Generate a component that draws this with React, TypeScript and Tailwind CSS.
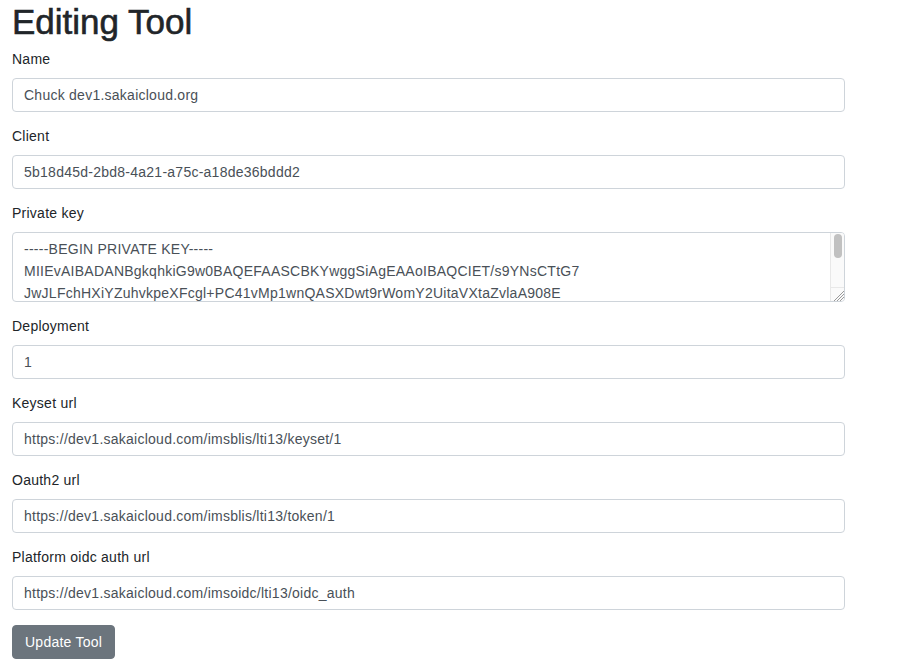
import React from "react";

const keyText = `-----BEGIN PRIVATE KEY-----
MIIEvAIBADANBgkqhkiG9w0BAQEFAASCBKYwggSiAgEAAoIBAQCIET/s9YNsCTtG7
JwJLFchHXiYZuhvkpeXFcgl+PC41vMp1wnQASXDwt9rWomY2UitaVXtaZvlaA908E
k3Wm0aNq5Ljn8X0bYt2PqfJ7uG1bLx9mK4dZrT6s3HcQvE8yWnU0iOa2pFgD5eRt
Lq7bN1cZ8xV9sM2kJ3hY6tR4wP0aE5uI7oG9dF2nB8vC1xQ3zA6mS4lK7jH0gT5e
-----END PRIVATE KEY-----`;

const fields: { label: string; value: string }[] = [
  { label: "Deployment", value: "1" },
  { label: "Keyset url", value: "https://dev1.sakaicloud.com/imsblis/lti13/keyset/1" },
  { label: "Oauth2 url", value: "https://dev1.sakaicloud.com/imsblis/lti13/token/1" },
  { label: "Platform oidc auth url", value: "https://dev1.sakaicloud.com/imsoidc/lti13/oidc_auth" },
];

const font = { fontFamily: '"Liberation Sans", Arial, sans-serif' };

function Field({ label, value }: { label: string; value: string }) {
  return (
    <div className="mb-[14px]">
      <label className="block text-[14px] leading-[21px] mb-[8px] text-[#212529] tracking-[0.25px]">{label}</label>
      <input
        readOnly
        value={value}
        className="block w-[833px] h-[34px] px-[11px] text-[14px] tracking-[0.25px] text-[#495057] bg-white border border-[#ced4da] rounded-[4px] outline-none"
        style={font}
      />
    </div>
  );
}

export default function App() {
  return (
    <div className="bg-white min-h-[662px] px-[12px] text-[#212529]" style={font}>
      <h1 className="text-[35px] leading-[44px] font-normal mb-[5px] m-0 [-webkit-text-stroke:0.6px_#212529]">
        Editing Tool
      </h1>
      <Field label="Name" value="Chuck dev1.sakaicloud.org" />
      <Field label="Client" value="5b18d45d-2bd8-4a21-a75c-a18de36bddd2" />
      <div className="mb-[14px]">
        <label className="block text-[14px] leading-[21px] mb-[8px] text-[#212529] tracking-[0.25px]">Private key</label>
        <div className="relative w-[833px] h-[70px]">
          <textarea
            readOnly
            value={keyText}
            className="block w-[833px] h-[70px] pl-[11px] pr-[20px] pt-[5px] text-[14px] leading-[22px] tracking-[0.25px] text-[#495057] bg-white border border-[#ced4da] rounded-[4px] outline-none overflow-hidden resize-y whitespace-pre"
            style={font}
          />
          <div className="absolute right-[1px] top-[1px] w-[14px] h-[54px] bg-[#fafafa] border-l border-[#e8e8e8] rounded-tr-[3px] pointer-events-none">
            <div className="mx-auto mt-[1px] w-[8px] h-[24px] rounded-full bg-[#c1c1c1]" />
          </div>
          <div className="absolute right-[1px] bottom-[1px] w-[14px] h-[14px] bg-[#fafafa] border-l border-t border-[#e8e8e8] rounded-br-[3px] pointer-events-none overflow-hidden">
            <svg width="14" height="14" viewBox="0 0 14 14">
              <line x1="3" y1="13" x2="13" y2="3" stroke="#9a9a9a" strokeWidth="1" />
              <line x1="6" y1="13" x2="13" y2="6" stroke="#9a9a9a" strokeWidth="1" />
              <line x1="9" y1="13" x2="13" y2="9" stroke="#9a9a9a" strokeWidth="1" />
            </svg>
          </div>
        </div>
      </div>
      {fields.map((f) => (
        <Field key={f.label} label={f.label} value={f.value} />
      ))}
      <button className="mt-[1px] h-[34px] px-[12px] text-[14px] tracking-[0.25px] text-white bg-[#6c757d] rounded-[4px] border border-[#6c757d]">
        Update Tool
      </button>
    </div>
  );
}
